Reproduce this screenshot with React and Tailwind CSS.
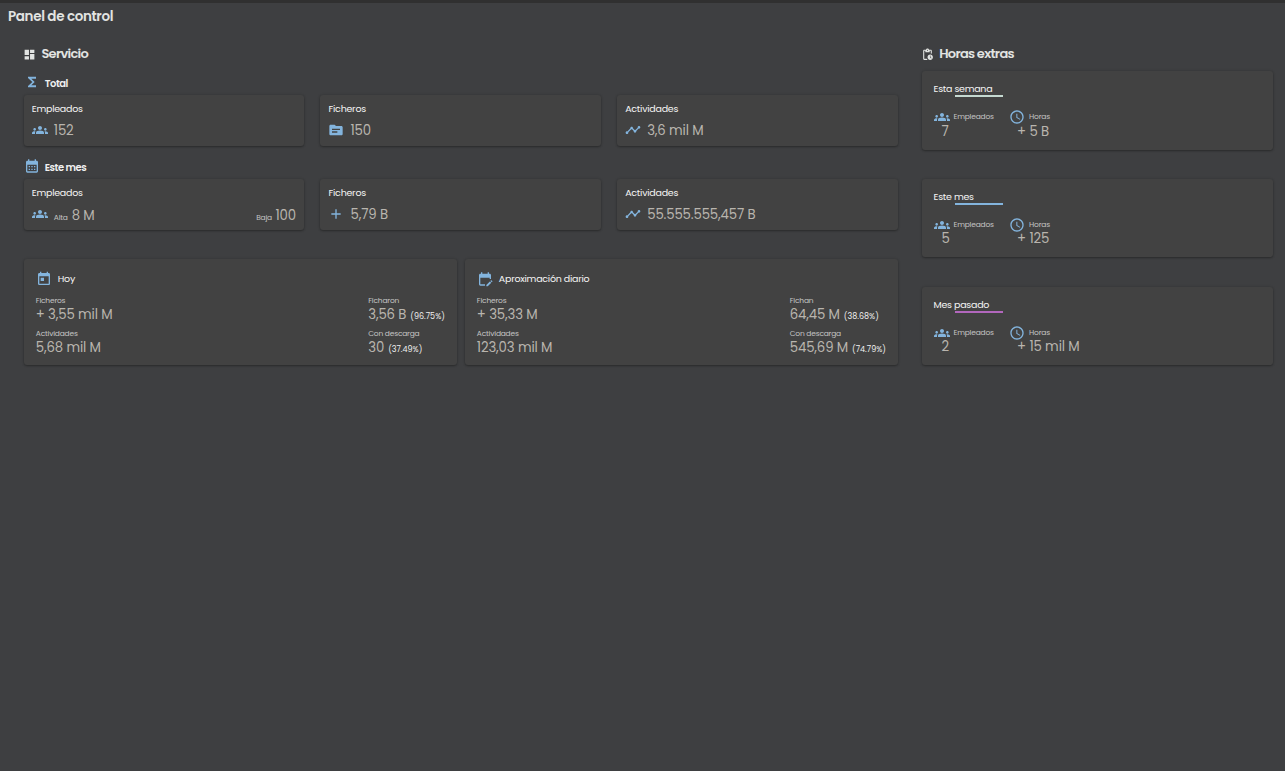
import React from "react";
import {
  MdDashboard, MdFunctions, MdGroups, MdTopic, MdTimeline, MdAdd,
  MdCalendarMonth, MdToday, MdEditCalendar, MdPendingActions, MdSchedule,
} from "react-icons/md";

const cardClass = "rounded-[3px] bg-[#424242] shadow-[0_1px_2px_rgba(0,0,0,0.28),0_0_3px_rgba(0,0,0,0.15)]";
const valueClass = "text-[13.25px] leading-4 tracking-[-0.13px] text-[#b9b5ae]";
const captionClass = "text-[7.5px] leading-2 tracking-[-0.2px] text-[#c4c4c4]";

function SectionTitle({ icon: Icon, children }) {
  return (
    <h2 className="flex h-5 items-center gap-[5px] text-[13px] font-semibold tracking-[-0.7px] text-[#e2e4e2]">
      <Icon size={13} className="mt-[2px] -ml-[0.4px] shrink-0" />
      <span className="pt-px">{children}</span>
    </h2>
  );
}

function SubTitle({ icon: Icon, children }) {
  return (
    <h3 className="flex h-4 items-center gap-[5px] text-[10px] font-semibold tracking-[-0.5px] text-[#f0f0f0]">
      <Icon size={16} className="shrink-0 text-[#83b4dd]" />
      <span className="pt-[2px]">{children}</span>
    </h3>
  );
}

function StatCard({ title, icon: Icon, children }) {
  return (
    <div className={`${cardClass} h-[51px] px-2 pt-[8px]`}>
      <div className="text-[9.5px] leading-3 tracking-[-0.25px] text-[#f4f4f4]">{title}</div>
      <div className="mt-[7px] flex h-4 items-center gap-[6px]">
        <Icon size={16} className="shrink-0 text-[#83b4dd]" />
        <div className="flex flex-1 pt-[2px]">{children}</div>
      </div>
    </div>
  );
}

function Metric({ label, value, percent }) {
  return (
    <div className="h-[33px]">
      <div className={captionClass}>{label}</div>
      <div className="flex items-baseline gap-[4px] pt-[1.5px]">
        <span className={valueClass}>{value}</span>
        {percent && <span className="pb-px text-[8px] leading-4 text-[#f0f0f0]">({percent})</span>}
      </div>
    </div>
  );
}

function SummaryCard({ icon: Icon, title, left, right }) {
  return (
    <div className={`${cardClass} h-[106px] px-3 pt-3`}>
      <div className="flex h-4 items-center gap-[6px] text-[9.5px] tracking-[-0.26px] text-[#f4f4f4]">
        <Icon size={16} className="shrink-0 text-[#83b4dd]" />
        <span>{title}</span>
      </div>
      <div className="mt-[10px] flex justify-between">
        <div>{left.map((m) => <Metric key={m.label} {...m} />)}</div>
        <div>{right.map((m) => <Metric key={m.label} {...m} />)}</div>
      </div>
    </div>
  );
}

function OvertimeCard({ title, line, people, hours }) {
  return (
    <div className={`${cardClass} h-[78.5px] px-3 pt-[12px]`}>
      <div className="text-[9.5px] leading-3 tracking-[-0.28px] text-[#f4f4f4]">{title}</div>
      <div className={`ml-[21.5px] h-[2px] w-12 ${line}`} />
      <div className="mt-[12px] flex">
        <div className="w-[75.5px]">
          <div className="flex h-4 items-center gap-1">
            <MdGroups size={16} className="shrink-0 text-[#83b4dd]" />
            <span className={captionClass}>Empleados</span>
          </div>
          <div className={`${valueClass} -mt-[1.5px] pl-2`}>{people}</div>
        </div>
        <div>
          <div className="flex h-4 items-center gap-1">
            <MdSchedule size={16} className="shrink-0 text-[#83b4dd]" />
            <span className={captionClass}>Horas</span>
          </div>
          <div className={`${valueClass} -mt-[1.5px] pl-2`}>{hours}</div>
        </div>
      </div>
    </div>
  );
}

export default function App() {
  return (
    <div className="h-[771px] w-[1285px] overflow-hidden border-t-[3px] border-[#303030] bg-[#3e3f41] font-[Poppins,Inter,sans-serif]">
      <h1 className="h-7 pl-2 text-[13.5px] leading-7 font-semibold tracking-[-0.37px] text-[#e2e4e2]">Panel de control</h1>
      <div className="flex gap-[23.7px] pt-[12px] pl-[23.8px]">
        <main className="w-[874.1px]">
          <SectionTitle icon={MdDashboard}>Servicio</SectionTitle>
          <div className="mt-[11px]">
            <SubTitle icon={MdFunctions}>Total</SubTitle>
          </div>
          <div className="mt-[5px] grid grid-cols-3 gap-4">
            <StatCard title="Empleados" icon={MdGroups}><span className={valueClass}>152</span></StatCard>
            <StatCard title="Ficheros" icon={MdTopic}><span className={valueClass}>150</span></StatCard>
            <StatCard title="Actividades" icon={MdTimeline}><span className={valueClass}>3,6 mil M</span></StatCard>
          </div>
          <div className="mt-[12px]">
            <SubTitle icon={MdCalendarMonth}>Este mes</SubTitle>
          </div>
          <div className="mt-[5px] grid grid-cols-3 gap-4">
            <StatCard title="Empleados" icon={MdGroups}>
              <div className="flex flex-1 items-baseline justify-between pt-px">
                <div className="flex items-baseline gap-1"><span className={captionClass}>Alta</span><span className={valueClass}>8 M</span></div>
                <div className="flex items-baseline gap-[3.5px] pr-[0.5px]"><span className={captionClass}>Baja</span><span className={valueClass}>100</span></div>
              </div>
            </StatCard>
            <StatCard title="Ficheros" icon={MdAdd}><span className={valueClass}>5,79 B</span></StatCard>
            <StatCard title="Actividades" icon={MdTimeline}><span className={valueClass}>55.555.555,457 B</span></StatCard>
          </div>
          <div className="mt-[29px] grid grid-cols-2 gap-2">
            <SummaryCard
              icon={MdToday}
              title="Hoy"
              left={[{ label: "Ficheros", value: "+ 3,55 mil M" }, { label: "Actividades", value: "5,68 mil M" }]}
              right={[{ label: "Ficharon", value: "3,56 B", percent: "96.75%" }, { label: "Con descarga", value: "30", percent: "37.49%" }]}
            />
            <SummaryCard
              icon={MdEditCalendar}
              title="Aproximación diario"
              left={[{ label: "Ficheros", value: "+ 35,33 M" }, { label: "Actividades", value: "123,03 mil M" }]}
              right={[{ label: "Fichan", value: "64,45 M", percent: "38.68%" }, { label: "Con descarga", value: "545,69 M", percent: "74.79%" }]}
            />
          </div>
        </main>
        <aside className="w-[351px]">
          <SectionTitle icon={MdPendingActions}>Horas extras</SectionTitle>
          <div className="mt-[8px] flex flex-col gap-[29.3px]">
            <OvertimeCard title="Esta semana" line="bg-[#c5d9d1]" people="7" hours="+ 5 B" />
            <OvertimeCard title="Este mes" line="bg-[#83b4dd]" people="5" hours="+ 125" />
            <OvertimeCard title="Mes pasado" line="bg-[#b267bd]" people="2" hours="+ 15 mil M" />
          </div>
        </aside>
      </div>
    </div>
  );
}
